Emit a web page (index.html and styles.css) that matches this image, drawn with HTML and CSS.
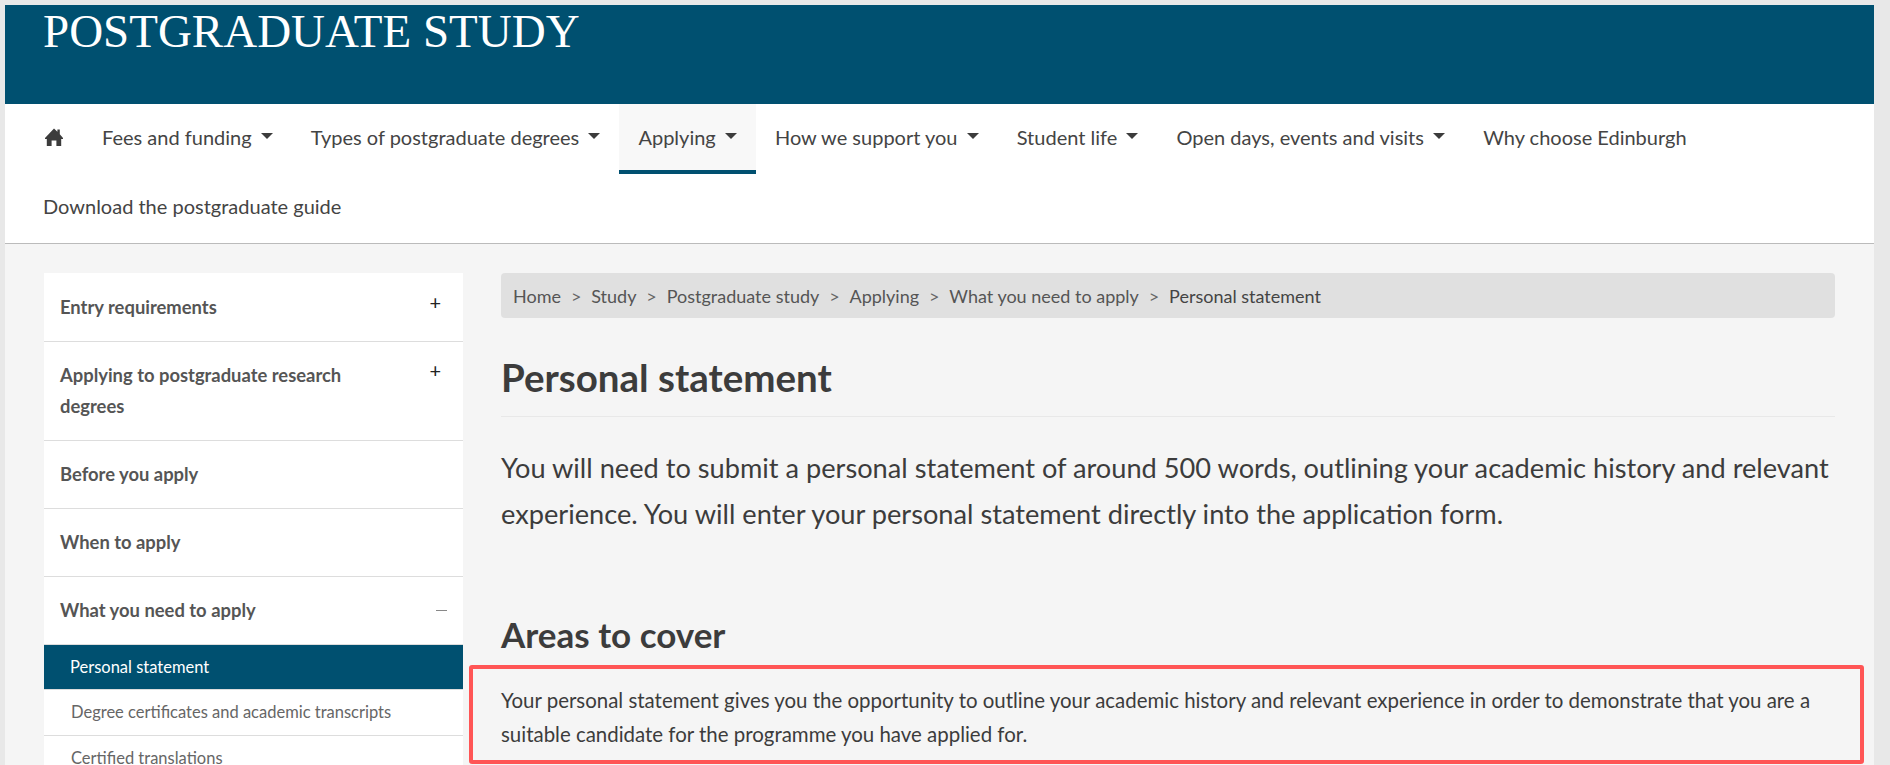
FILE: index.html
```html
<!DOCTYPE html>
<html lang="en">
<head>
    <meta charset="UTF-8">
    <title>Personal statement | Postgraduate study</title>
    <link rel="stylesheet" href="styles.css">
</head>
<body>
    <div class="page">
        <header class="banner">
            <div class="banner-title">POSTGRADUATE STUDY</div>
        </header>
        <nav class="topnav">
            <a class="topnav-item topnav-home" href="#" aria-label="Home">
                <svg class="home-icon" viewBox="0 0 18 18" width="18" height="18"><path fill="#3c3c3c" d="M9 0.5 L12.4 3.8 V1.5 H14.8 V6.2 L18 10 V11 H16.2 V18 H11.4 V12.5 H6.6 V18 H1.8 V11 H0 V10 Z"/></svg>
            </a>
            <a class="topnav-item caret" href="#">Fees and funding</a>
            <a class="topnav-item caret" href="#">Types of postgraduate degrees</a>
            <a class="topnav-item caret active" href="#">Applying</a>
            <a class="topnav-item caret" href="#">How we support you</a>
            <a class="topnav-item caret" href="#">Student life</a>
            <a class="topnav-item caret" href="#">Open days, events and visits</a>
            <a class="topnav-item" href="#">Why choose Edinburgh</a>
            <a class="topnav-item topnav-guide" href="#">Download the postgraduate guide</a>
        </nav>
        <div class="main">
            <aside class="sidenav">
                <a class="side-row" href="#"><span>Entry requirements</span><i class="side-plus">+</i></a>
                <a class="side-row" href="#"><span>Applying to postgraduate research degrees</span><i class="side-plus">+</i></a>
                <a class="side-row" href="#"><span>Before you apply</span></a>
                <a class="side-row" href="#"><span>When to apply</span></a>
                <a class="side-row" href="#"><span>What you need to apply</span><i class="side-minus"></i></a>
                <a class="side-sub current" href="#">Personal statement</a>
                <a class="side-sub" href="#">Degree certificates and academic transcripts</a>
                <a class="side-sub" href="#">Certified translations</a>
            </aside>
            <main class="content">
                <div class="breadcrumb">
                    <a href="#">Home</a><span class="sep">&gt;</span>
                    <a href="#">Study</a><span class="sep">&gt;</span>
                    <a href="#">Postgraduate study</a><span class="sep">&gt;</span>
                    <a href="#">Applying</a><span class="sep">&gt;</span>
                    <a href="#">What you need to apply</a><span class="sep">&gt;</span>
                    <span class="crumb-current">Personal statement</span>
                </div>
                <h1>Personal statement</h1>
                <p class="lead">You will need to submit a personal statement of around 500 words, outlining your academic history and relevant experience. You will enter your personal statement directly into the application form.</p>
                <h2>Areas to cover</h2>
                <p class="body-text marked">Your personal statement gives you the opportunity to outline your academic history and relevant experience in order to demonstrate that you are a suitable candidate for the programme you have applied for.</p>
            </main>
        </div>
    </div>
</body>
</html>
```
FILE: styles.css
```css
html, body { margin: 0; padding: 0; height: 765px; overflow: hidden; }
body { font-family: Lato, "Noto Sans", sans-serif; background: #e8e8e8; color: #3c3c3c; }
a { color: inherit; text-decoration: none; }

.page { margin: 5px 16px 0 5px; background: #f5f5f5; height: 760px; overflow: hidden; }

.banner { background: #005070; height: 99px; padding-left: 38px; box-sizing: border-box; }
.banner-title { font-family: "Liberation Serif", serif; font-size: 47px; line-height: 52px; color: #fff; }

.topnav { display: flex; flex-wrap: wrap; background: #fff; padding: 0 20px; border-bottom: 1px solid #bbb; height: 139px; align-content: flex-start; }
.topnav-item { display: flex; align-items: center; height: 70px; padding: 0 19px 5px; font-size: 20px; color: #444; box-sizing: border-box; white-space: nowrap; }
.topnav-home { padding: 0 20px 4px; }
.topnav-guide { height: 69px; padding-left: 18px; }
.topnav-item.caret::after { content: ""; margin-left: 9.2px; margin-bottom: 2px; border-left: 6px solid transparent; border-right: 6px solid transparent; border-top: 6px solid #3c3c3c; }
.topnav-item.active { background: #f8f8f8; border-bottom: 4px solid #005070; padding-bottom: 1px; }
.home-icon { display: block; }

.main { display: grid; grid-template-columns: 419px 1fr; gap: 38px; padding: 29px 39px 0; }

.sidenav { background: #fff; align-self: start; padding-top: 1px; }
.side-row { display: flex; justify-content: space-between; padding: 18px 16px; font-size: 18.4px; line-height: 31px; font-weight: 700; color: #555; border-bottom: 1px solid #ddd; }
.side-row span { max-width: 300px; }
.side-plus { font-style: normal; font-weight: 400; font-size: 20px; line-height: 20px; color: #222; margin-right: 6px; }
.side-minus { display: block; width: 11px; height: 1px; background: #888; margin: 15px 0 0; }
.side-sub { display: block; padding: 0 27px; height: 46px; line-height: 45px; font-size: 16.5px; color: #666; border-bottom: 1px solid #ddd; box-sizing: border-box; }
.side-sub.current { background: #005070; color: #fff; height: 45px; line-height: 44px; padding: 0 26px; }

.breadcrumb { display: flex; align-items: center; height: 45px; padding: 1px 12px 0; background: #e0e0e0; border-radius: 4px; font-size: 18px; color: #555; box-sizing: border-box; }
.sep { margin: 0 9.9px; color: #666; }
.crumb-current { color: #444; }

h1 { margin: 0; padding: 31px 0 11px; font-size: 38.5px; line-height: 56px; font-weight: 700; color: #3c3c3c; border-bottom: 1px solid #e8e8e8; }
.lead { margin: 28px 0 0; font-size: 27.2px; line-height: 45.6px; color: #3c3c3c; }
h2 { margin: 0; padding-top: 78px; font-size: 35px; line-height: 40px; font-weight: 700; color: #3c3c3c; }

.body-text { font-size: 20.45px; line-height: 34px; color: #3c3c3c; margin: 29px 0 0; }
.marked { position: relative; }
.marked::after { content: ""; position: absolute; left: -32px; right: -29px; top: -18px; bottom: -13px; border: 4px solid #ff5555; border-radius: 3px; }
```
